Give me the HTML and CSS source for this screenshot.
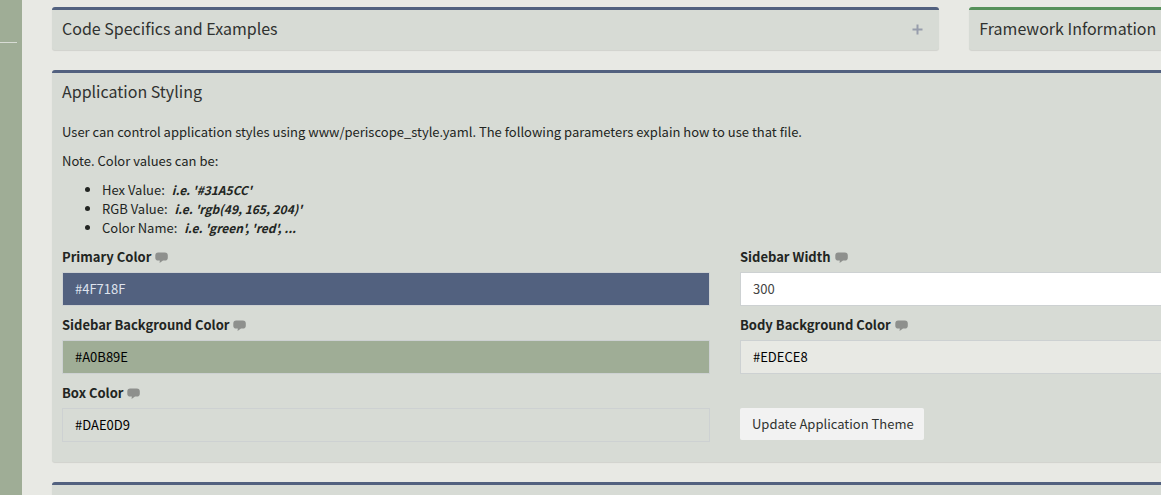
FILE: index.html
```
<!DOCTYPE html>
<html lang="en">
<head>
<meta charset="utf-8">
<title>Application Styling</title>
<link rel="stylesheet" href="styles.css">
</head>
<body>
<svg class="symbols" aria-hidden="true">
  <symbol id="comment" viewBox="0 0 13 11">
    <path d="M3.2 0.5H9.8Q12.8 0.5 12.8 3.4V5.8Q12.8 8.6 9.8 8.6H8L4.6 10.9L4.8 8.6H3.2Q0.3 8.6 0.3 5.8V3.4Q0.3 0.5 3.2 0.5Z"/>
  </symbol>
</svg>
<div class="page">
  <aside class="sidebar"><hr class="divider"></aside>
  <main class="content">
    <section class="box box-wide">
      <header class="box-header">
        <h3 class="box-title">Code Specifics and Examples</h3>
        <button class="box-tool" type="button" aria-label="Expand">
          <svg class="plus" viewBox="0 0 11 11"><path d="M5.5 0.5V10.5M0.5 5.5H10.5"/></svg>
        </button>
      </header>
    </section>
    <section class="box box-narrow box-success">
      <header class="box-header"><h3 class="box-title">Framework Information</h3></header>
    </section>
    <section class="box box-full">
      <header class="box-header"><h3 class="box-title">Application Styling</h3></header>
      <div class="box-body">
        <p>User can control application styles using www/periscope_style.yaml. The following parameters explain how to use that file.</p>
        <p>Note. Color values can be:</p>
        <ul class="formats">
          <li>Hex Value: <em class="example">i.e. '#31A5CC'</em></li>
          <li>RGB Value: <em class="example">i.e. 'rgb(49, 165, 204)'</em></li>
          <li>Color Name: <em class="example">i.e. 'green', 'red', ...</em></li>
        </ul>
        <form class="fields">
          <div class="field">
            <label for="primary">Primary Color <svg class="hint"><use href="#comment"/></svg></label>
            <input class="control control-primary" id="primary" type="text" value="#4F718F">
          </div>
          <div class="field">
            <label for="width">Sidebar Width <svg class="hint"><use href="#comment"/></svg></label>
            <input class="control" id="width" type="text" value="300">
          </div>
          <div class="field">
            <label for="sidebar">Sidebar Background Color <svg class="hint"><use href="#comment"/></svg></label>
            <input class="control control-sidebar" id="sidebar" type="text" value="#A0B89E">
          </div>
          <div class="field">
            <label for="body">Body Background Color <svg class="hint"><use href="#comment"/></svg></label>
            <input class="control control-body" id="body" type="text" value="#EDECE8">
          </div>
          <div class="field">
            <label for="box">Box Color <svg class="hint"><use href="#comment"/></svg></label>
            <input class="control control-box" id="box" type="text" value="#DAE0D9">
          </div>
          <div class="field field-action">
            <button class="update" type="button">Update Application Theme</button>
          </div>
        </form>
      </div>
    </section>
    <section class="box box-full"><header class="box-header"></header></section>
  </main>
</div>
</body>
</html>
```
FILE: styles.css
```
* { box-sizing: border-box; }

html { height: 100%; overflow: hidden; }

body {
  margin: 0;
  height: 100%;
  overflow: hidden;
  background: #e8e9e4;
  color: #222522;
  font: 13px/19px "Noto Sans CJK SC", "Open Sans", sans-serif;
}

.symbols { display: none; }

.page { display: flex; width: 123vw; min-height: 100%; }

.sidebar { flex: 0 0 22px; padding-top: 42px; background: #9fad96; }
.divider { margin: 0 5px 0 0; border: 0; border-top: 1px solid #d8dcd5; }

.content {
  flex: 1;
  display: grid;
  grid-template-columns: repeat(12, 1fr);
  gap: 20px 30px;
  align-content: start;
  padding: 7px 30px 0;
}

.box {
  background: #d7dbd5;
  border-top: 3px solid #52617f;
  border-radius: 3px;
  box-shadow: 0 1px 1px rgba(0, 0, 0, 0.1);
}
.box-wide { grid-column: span 8; }
.box-narrow { grid-column: span 4; }
.box-full { grid-column: span 12; }
.box-success { border-top-color: #56915a; }

.box-header {
  display: flex;
  align-items: center;
  justify-content: space-between;
  height: 40px;
  padding: 0 10px 2px;
}
.box-title { margin: 0; padding-bottom: 2px; font-size: 16px; font-weight: 400; line-height: 20px; color: #303230; }
.box-tool { display: flex; padding: 5px 6px; border: 0; background: none; }
.plus { width: 11px; height: 11px; fill: none; stroke: #979dac; stroke-width: 2; }

.box-body { padding: 9px 10px 10px; }
.box-body p { margin: 0 0 10px; }
.formats { margin: 0 0 10px; padding-left: 40px; }
.example { margin-left: 4px; font-size: 12px; font-weight: 700; }

.fields { display: grid; grid-template-columns: 1fr 1fr; gap: 9px 30px; padding-bottom: 10px; }
.field { display: flex; flex-direction: column; gap: 6px; }
.field label { display: flex; align-items: center; gap: 4px; font-weight: 700; }
.hint { width: 13px; height: 11px; margin-top: 2px; fill: #8e908d; }

.control {
  width: 100%;
  height: 34px;
  padding: 0 12px 2px;
  border: 1px solid #cdd1d2;
  border-radius: 0;
  background: #fff;
  color: #444;
  font: inherit;
}
.control-primary { background: #52617f; color: #dfe3ee; }
.control-sidebar { background: #9fad96; color: #000; }
.control-body { background: #e8e9e4; color: #000; }
.control-box { background: #d7dbd5; color: #000; }

.field-action { align-items: flex-start; padding-top: 25px; }
.update {
  height: 32px;
  padding: 0 10px 2px 12px;
  border: 0;
  border-radius: 2px;
  background: #f2f2f2;
  color: #303230;
  font: inherit;
}
```
